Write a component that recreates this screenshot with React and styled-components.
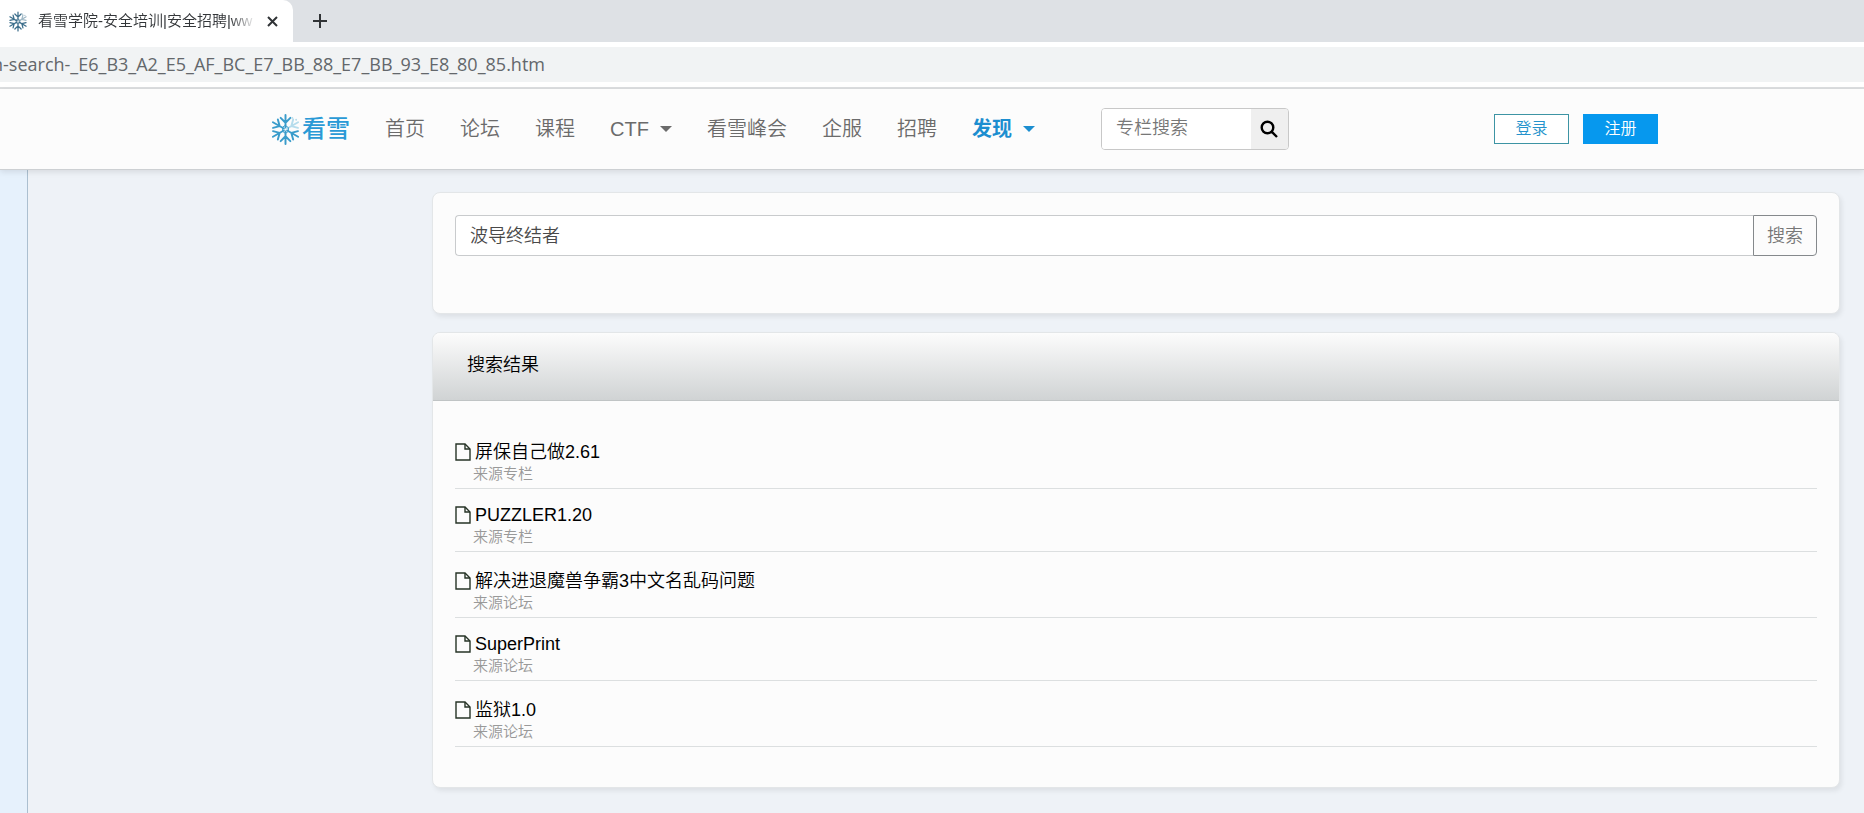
import React, { useState } from 'react'
import styled, { createGlobalStyle } from 'styled-components'

const GlobalStyle = createGlobalStyle`
  * {
    box-sizing: border-box;
  }
  body {
    margin: 0;
    background: #eef2f7;
    font-family: "Liberation Sans", "Noto Sans CJK SC", sans-serif;
    font-weight: 350;
    overflow-x: hidden;
  }
  input, button {
    font-family: inherit;
    font-weight: inherit;
  }
`

const Page = styled.div`
  display: flex;
  flex-direction: column;
  min-height: 100vh;
`

const TabStrip = styled.div`
  display: flex;
  align-items: center;
  height: 42px;
  background: #dee1e5;
`

const Tab = styled.div`
  display: flex;
  align-items: center;
  align-self: stretch;
  width: 293px;
  padding: 0 12px 0 8px;
  background: white;
  border-radius: 0 10px 0 0;
`

const TabTitle = styled.span`
  flex: 1;
  margin: 0 7px 0 10px;
  white-space: nowrap;
  font-size: 15px;
  line-height: 22px;
  color: #333639;
  mask-image: linear-gradient(to right, black 88%, transparent);
`

const TabButton = styled.button`
  display: flex;
  align-items: center;
  justify-content: center;
  width: 18px;
  height: 18px;
  padding: 0;
  border: 0;
  background: none;
  color: #303336;
`

const NewTab = styled(TabButton)`
  margin-left: 18px;
`

const AddressBar = styled.div`
  padding: 5px 0;
  background: white;
  border-bottom: 2px solid #dcdee0;
  overflow: hidden;
`

const Address = styled.input`
  display: block;
  width: 100%;
  height: 35px;
  padding: 0 0 1px;
  border: 0;
  background: #f1f3f4;
  font-family: "Open Sans", sans-serif;
  font-size: 18px;
  font-weight: 400;
  color: #63676b;
  text-indent: -8px;
`

const Header = styled.header`
  position: relative;
  height: 81px;
  background: #fcfcfc;
  border-bottom: 1px solid #cdd0d3;
  box-shadow: 0 2px 6px rgba(0, 0, 0, 0.1);
`

const HeaderInner = styled.div`
  display: flex;
  align-items: center;
  max-width: 1388px;
  height: 100%;
  margin-left: 270px;
`

const Logo = styled.a`
  display: flex;
  align-items: center;
  gap: 1px;
  margin-right: 35px;
  font-size: 24px;
  font-weight: 500;
  line-height: 32px;
  color: #2a9ad6;
  text-decoration: none;
`

const Menu = styled.nav`
  display: flex;
  gap: 35px;
`

const MenuItem = styled.a`
  display: flex;
  align-items: center;
  gap: 11px;
  font-size: 20px;
  font-weight: ${(props) => (props.$active ? 700 : 350)};
  line-height: 30px;
  color: ${(props) => (props.$active ? '#1c8ed0' : '#6b6b6b')};
  text-decoration: none;
  white-space: nowrap;
`

const Caret = styled.span`
  border-top: 6px solid;
  border-left: 6px solid transparent;
  border-right: 6px solid transparent;
`

const ColumnSearch = styled.form`
  display: flex;
  width: 188px;
  height: 42px;
  margin-left: 66px;
  border: 1px solid #c8c8c8;
  border-radius: 4px;
  overflow: hidden;
`

const ColumnInput = styled.input`
  flex: 1;
  min-width: 0;
  padding: 0 14px 2px;
  border: 0;
  background: white;
  font-size: 18px;
  &::placeholder {
    color: #777;
    opacity: 1;
  }
`

const ColumnButton = styled.button`
  display: flex;
  align-items: center;
  justify-content: center;
  width: 37px;
  padding: 0;
  border: 0;
  background: #efefef;
`

const Account = styled.div`
  display: flex;
  gap: 14px;
  margin-left: auto;
`

const AccountButton = styled.button`
  width: 75px;
  height: 30px;
  padding: 0;
  border: 1px solid ${(props) => (props.$filled ? '#0698ee' : '#3d94a4')};
  background: ${(props) => (props.$filled ? '#0698ee' : 'white')};
  color: ${(props) => (props.$filled ? 'white' : '#2593cc')};
  font-size: 16px;
  line-height: 20px;
`

const Body = styled.div`
  display: flex;
  flex: 1;
`

const SideStrip = styled.div`
  width: 28px;
  background: #e6f1fc;
  border-right: 1px solid #abbfd0;
`

const Main = styled.main`
  display: flex;
  flex: 1;
  flex-direction: column;
  gap: 18px;
  margin: 22px 24px 26px 404px;
`

const Card = styled.section`
  background: #fcfcfc;
  border: 1px solid #e3e6e8;
  border-radius: 8px;
  box-shadow: 2px 3px 5px rgba(0, 0, 0, 0.07);
  overflow: hidden;
`

const SearchForm = styled.form`
  display: flex;
  padding: 22px 22px 57px;
`

const SearchInput = styled.input`
  flex: 1;
  height: 41px;
  padding: 0 14px 4px;
  border: 1px solid #c9cbcd;
  border-right: 0;
  border-radius: 4px 0 0 4px;
  background: white;
  font-size: 18px;
  color: #494949;
`

const SearchButton = styled.button`
  width: 64px;
  height: 41px;
  padding: 0 0 4px;
  border: 1px solid #85898c;
  border-radius: 0 4px 4px 0;
  background: #fcfcfc;
  font-size: 18px;
  color: #777;
`

const ResultHeader = styled.h2`
  height: 68px;
  margin: 0;
  padding: 0 34px;
  border-bottom: 1px solid #c0c4c5;
  background: linear-gradient(#fcfcfc, #d0d3d4);
  font-size: 18px;
  font-weight: 350;
  line-height: 64px;
  color: #000;
`

const ResultList = styled.ul`
  margin: 0;
  padding: 22px 22px 40px;
  list-style: none;
`

const ResultItem = styled.li`
  padding: ${(props) => (props.$chinese ? 19 : 16)}px 0 3px;
  border-bottom: 1px solid #dcdfe0;
`

const ResultLink = styled.a`
  display: flex;
  align-items: center;
  gap: 4px;
  font-size: 18px;
  line-height: 20px;
  color: #000;
  text-decoration: none;
`

const Source = styled.div`
  padding-left: 18px;
  font-size: 15px;
  line-height: 23px;
  color: #999;
`

const results = [
  { id: 1, title: '屏保自己做2.61', source: '来源专栏', chinese: true },
  { id: 2, title: 'PUZZLER1.20', source: '来源专栏' },
  { id: 3, title: '解决进退魔兽争霸3中文名乱码问题', source: '来源论坛', chinese: true },
  { id: 4, title: 'SuperPrint', source: '来源论坛' },
  { id: 5, title: '监狱1.0', source: '来源论坛', chinese: true }
]

const menu = [
  { name: '首页' },
  { name: '论坛' },
  { name: '课程' },
  { name: 'CTF', caret: true },
  { name: '看雪峰会' },
  { name: '企服' },
  { name: '招聘' },
  { name: '发现', caret: true, active: true }
]

const Snowflake = ({ width, height, color, pale }) => (
  <svg width={width} height={height} viewBox="-16 -16 32 32" fill="none" strokeWidth="2" strokeLinecap="round" aria-hidden="true">
    {[0, 60, 120, 180, 240, 300].map((angle) => (
      <path
        key={angle}
        d="M0 -2V-15M0 -7L-5 -12M0 -7L5 -12"
        stroke={angle === 60 ? pale : color}
        transform={`rotate(${angle})`}
      />
    ))}
    <path d="M0 -4L3 -2V2L0 4L-3 2V-2Z" stroke={color} strokeWidth="1" />
    <circle cx="7" cy="-12" r="1" fill={pale} />
    <circle cx="11" cy="-10" r="1" fill={pale} />
  </svg>
)

const FileIcon = () => (
  <svg width="16" height="18" viewBox="0 0 16 18" fill="none" stroke="#263326" strokeWidth="1.4" aria-hidden="true">
    <path d="M1 1H10L15 6V17H1Z" />
    <path d="M10 1V6H15" />
  </svg>
)

const App = () => {
  const [keyword, setKeyword] = useState('波导终结者')
  const [address, setAddress] = useState('n-search-_E6_B3_A2_E5_AF_BC_E7_BB_88_E7_BB_93_E8_80_85.htm')

  const onSubmit = (event) => {
    event.preventDefault()
  }

  return (
    <Page>
      <GlobalStyle />
      <TabStrip>
        <Tab>
          <Snowflake width={20} height={21} color="#3d6f8c" pale="#9fb8c6" />
          <TabTitle>看雪学院-安全培训|安全招聘|ww</TabTitle>
          <TabButton aria-label="关闭">
            <svg width="11" height="11" viewBox="0 0 11 11" stroke="currentColor" strokeWidth="2">
              <path d="M1 1L10 10M10 1L1 10" />
            </svg>
          </TabButton>
        </Tab>
        <NewTab aria-label="新标签页">
          <svg width="16" height="16" viewBox="0 0 16 16" stroke="currentColor" strokeWidth="2">
            <path d="M8 1V15M1 8H15" />
          </svg>
        </NewTab>
      </TabStrip>
      <AddressBar>
        <Address aria-label="地址" value={address} onChange={(e) => setAddress(e.target.value)} />
      </AddressBar>

      <Header>
        <HeaderInner>
          <Logo href="#">
            <Snowflake width={31} height={33} color="#3a9ccb" pale="#b5dcec" />
            看雪
          </Logo>
          <Menu>
            {menu.map((item) => (
              <MenuItem key={item.name} href="#" $active={item.active}>
                {item.name}
                {item.caret && <Caret />}
              </MenuItem>
            ))}
          </Menu>
          <ColumnSearch onSubmit={onSubmit}>
            <ColumnInput placeholder="专栏搜索" aria-label="专栏搜索" />
            <ColumnButton aria-label="提交搜索">
              <svg width="18" height="18" viewBox="0 0 18 18" fill="none" stroke="black" strokeWidth="2.4">
                <circle cx="7.5" cy="7.5" r="5.8" />
                <path d="M11.6 11.6L17 17" />
              </svg>
            </ColumnButton>
          </ColumnSearch>
          <Account>
            <AccountButton>登录</AccountButton>
            <AccountButton $filled>注册</AccountButton>
          </Account>
        </HeaderInner>
      </Header>

      <Body>
        <SideStrip />
        <Main>
          <Card>
            <SearchForm onSubmit={onSubmit}>
              <SearchInput aria-label="搜索" value={keyword} onChange={(e) => setKeyword(e.target.value)} />
              <SearchButton>搜索</SearchButton>
            </SearchForm>
          </Card>
          <Card>
            <ResultHeader>搜索结果</ResultHeader>
            <ResultList>
              {results.map((result) => (
                <ResultItem key={result.id} $chinese={result.chinese}>
                  <ResultLink href="#">
                    <FileIcon />
                    {result.title}
                  </ResultLink>
                  <Source>{result.source}</Source>
                </ResultItem>
              ))}
            </ResultList>
          </Card>
        </Main>
      </Body>
    </Page>
  )
}

export default App
